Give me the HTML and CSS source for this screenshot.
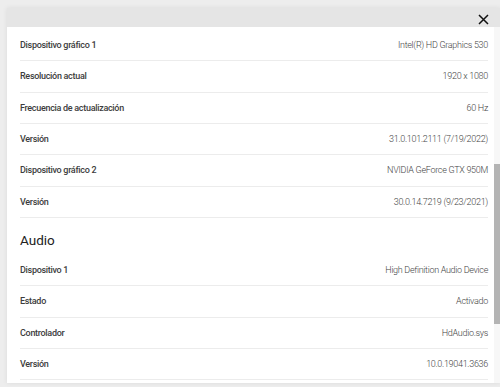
FILE: index.html
```html
<!DOCTYPE html>
<html lang="es">
<head>
    <meta charset="UTF-8">
    <meta name="viewport" content="width=device-width, initial-scale=1.0">
    <title>Información del sistema</title>
    <link rel="stylesheet" href="styles.css">
</head>
<body>
    <div class="dialog">
        <header class="dialog-header">
            <button class="close-button" aria-label="Cerrar">
                <svg width="11" height="11" viewBox="0 0 11 11">
                    <path d="M1 1 L10 10 M10 1 L1 10" stroke="#111" stroke-width="1.5" fill="none"/>
                </svg>
            </button>
        </header>
        <div class="dialog-body">
            <div class="info-list">
                <div class="info-row"><span class="label">Dispositivo gráfico 1</span><span class="value">Intel(R) HD Graphics 530</span></div>
                <div class="info-row"><span class="label">Resolución actual</span><span class="value">1920 x 1080</span></div>
                <div class="info-row"><span class="label">Frecuencia de actualización</span><span class="value">60 Hz</span></div>
                <div class="info-row"><span class="label">Versión</span><span class="value">31.0.101.2111 (7/19/2022)</span></div>
                <div class="info-row"><span class="label">Dispositivo gráfico 2</span><span class="value">NVIDIA GeForce GTX 950M</span></div>
                <div class="info-row"><span class="label">Versión</span><span class="value">30.0.14.7219 (9/23/2021)</span></div>

                <h2 class="section-title">Audio</h2>
                <div class="info-row"><span class="label">Dispositivo 1</span><span class="value">High Definition Audio Device</span></div>
                <div class="info-row"><span class="label">Estado</span><span class="value">Activado</span></div>
                <div class="info-row"><span class="label">Controlador</span><span class="value">HdAudio.sys</span></div>
                <div class="info-row"><span class="label">Versión</span><span class="value">10.0.19041.3636</span></div>
            </div>
            <div class="scrollbar">
                <div class="scrollbar-thumb"></div>
            </div>
        </div>
    </div>
</body>
</html>
```

FILE: styles.css
```css
body {
    margin: 0;
    padding: 8px 0 4px 7px;
    font-family: Roboto, "Noto Sans", sans-serif;
    background-color: #ededed;
    color: #333;
}

.dialog {
    display: flex;
    flex-direction: column;
    height: 375px;
    background-color: #fff;
    box-shadow: 0 0 5px rgba(0, 0, 0, 0.08);
}

.dialog-header {
    display: flex;
    justify-content: flex-end;
    height: 19px;
    padding-right: 11px;
    background-color: #e5e5e5;
}

.close-button {
    padding: 0;
    margin-top: 6px;
    height: 11px;
    border: none;
    background: none;
    cursor: pointer;
}

.close-button svg {
    display: block;
}

.dialog-body {
    display: flex;
    flex: 1;
    overflow: hidden;
}

.info-list {
    flex: 1;
    padding: 2.8px 6px 0 13px;
}

.info-row {
    display: flex;
    justify-content: space-between;
    line-height: 30.4px;
    border-bottom: 1px solid #ececec;
    font-size: 9px;
    letter-spacing: -0.3px;
}

.label {
    font-weight: 500;
    color: #3c3c3c;
}

.value {
    font-weight: 300;
    color: #444;
}

.section-title {
    margin: 0;
    padding: 13px 0 5.6px;
    line-height: 18px;
    font-size: 13.5px;
    font-weight: 400;
    color: #222;
}

.scrollbar {
    width: 6px;
    background-color: #f7f7f7;
}

.scrollbar-thumb {
    height: 160px;
    margin-top: 137px;
    background-color: #b4b4b4;
}
```
